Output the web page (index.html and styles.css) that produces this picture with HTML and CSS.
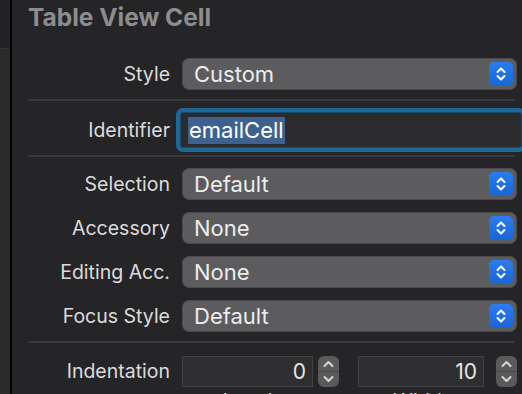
FILE: index.html
```html
<!DOCTYPE html>
<html lang="en">
<head>
  <meta charset="UTF-8" />
  <title>Attributes Inspector</title>
  <link rel="stylesheet" href="styles.css">
</head>
<body>
  <div class="window">
    <aside class="sidebar">
      <div class="sidebar-top"></div>
    </aside>

    <main class="inspector">
      <h1 class="section-title">Table View Cell</h1>

      <div class="row first">
        <label class="label">Style</label>
        <div class="popup">
          <span class="popup-value">Custom</span>
          <span class="popup-arrows">
            <svg width="24" height="24" viewBox="0 0 24 24"><path d="M8.5 10 L12 6.5 L15.5 10 M8.5 14 L12 17.5 L15.5 14" /></svg>
          </span>
        </div>
      </div>

      <div class="divider"></div>

      <div class="row ident">
        <label class="label">Identifier</label>
        <div class="textfield focused">
          <span class="selected">emailCell</span>
        </div>
      </div>

      <div class="divider short"></div>

      <div class="rows">
        <div class="row">
          <label class="label">Selection</label>
          <div class="popup">
            <span class="popup-value">Default</span>
            <span class="popup-arrows">
              <svg width="24" height="24" viewBox="0 0 24 24"><path d="M8.5 10 L12 6.5 L15.5 10 M8.5 14 L12 17.5 L15.5 14" /></svg>
            </span>
          </div>
        </div>
        <div class="row">
          <label class="label">Accessory</label>
          <div class="popup">
            <span class="popup-value">None</span>
            <span class="popup-arrows">
              <svg width="24" height="24" viewBox="0 0 24 24"><path d="M8.5 10 L12 6.5 L15.5 10 M8.5 14 L12 17.5 L15.5 14" /></svg>
            </span>
          </div>
        </div>
        <div class="row">
          <label class="label">Editing Acc.</label>
          <div class="popup">
            <span class="popup-value">None</span>
            <span class="popup-arrows">
              <svg width="24" height="24" viewBox="0 0 24 24"><path d="M8.5 10 L12 6.5 L15.5 10 M8.5 14 L12 17.5 L15.5 14" /></svg>
            </span>
          </div>
        </div>
        <div class="row">
          <label class="label">Focus Style</label>
          <div class="popup">
            <span class="popup-value">Default</span>
            <span class="popup-arrows">
              <svg width="24" height="24" viewBox="0 0 24 24"><path d="M8.5 10 L12 6.5 L15.5 10 M8.5 14 L12 17.5 L15.5 14" /></svg>
            </span>
          </div>
        </div>
      </div>

      <div class="divider"></div>

      <div class="row numbers">
        <label class="label">Indentation</label>
        <div class="number-group">
          <div class="number-pair level">
            <div class="number-field">0</div>
            <div class="stepper">
              <svg width="21" height="31" viewBox="0 0 21 31"><line class="mid" x1="0" y1="15.5" x2="21" y2="15.5" /><path d="M6.5 10 L10.5 6 L14.5 10 M6.5 21 L10.5 25 L14.5 21" /></svg>
            </div>
            <div class="caption">Level</div>
          </div>
          <div class="number-pair width">
            <div class="number-field">10</div>
            <div class="stepper">
              <svg width="21" height="31" viewBox="0 0 21 31"><line class="mid" x1="0" y1="15.5" x2="21" y2="15.5" /><path d="M6.5 10 L10.5 6 L14.5 10 M6.5 21 L10.5 25 L14.5 21" /></svg>
            </div>
            <div class="caption">Width</div>
          </div>
        </div>
      </div>
    </main>
  </div>
</body>
</html>
```

FILE: styles.css
```css
:root {
  --panel: #252528;
  --sidebar: #2a2a2b;
  --sidebar-top: #222224;
  --label: #dcdcdc;
  --title: #8d8d8f;
  --popup: #5c5c5e;
  --popup-edge: #4b4b4d;
  --line: #38383a;
  --blue: #1c6fe0;
  --ring: #1f6797;
  --field: #2b2b2d;
}

* {
  margin: 0;
  padding: 0;
  box-sizing: border-box;
}

html,
body {
  height: 100%;
}

body {
  font-family: 'Inter', 'Liberation Sans', sans-serif;
  background: var(--panel);
  color: var(--label);
  overflow: hidden;
}

.window {
  display: flex;
  height: 394px;
}

.sidebar {
  width: 12px;
  flex: none;
  background: var(--sidebar);
  border-right: 2px solid #000;
}

.sidebar-top {
  height: 49px;
  background: var(--sidebar-top);
  border-bottom: 1px solid #343436;
}

.inspector {
  flex: 1;
  padding: 3px 5px 0 16px;
  min-width: 0;
}

.section-title {
  font-size: 24.5px;
  line-height: 28px;
  font-weight: 700;
  color: var(--title);
}

.row {
  display: grid;
  grid-template-columns: 142px 1fr;
  column-gap: 12px;
  align-items: center;
  height: 32px;
}

.row.first {
  margin-top: 27px;
}

.label {
  text-align: right;
  font-size: 19.5px;
  color: var(--label);
  white-space: nowrap;
}

.popup {
  display: flex;
  align-items: center;
  justify-content: space-between;
  height: 32px;
  background: var(--popup);
  border: 1px solid var(--popup-edge);
  border-radius: 7px;
  padding: 0 3px 0 11px;
}

.popup-value {
  font-size: 22px;
  color: #ececec;
}

.popup-arrows {
  width: 24px;
  height: 24px;
  border-radius: 5px;
  background: linear-gradient(#2a7df0, #1766d8);
  display: flex;
}

.popup-arrows path {
  fill: none;
  stroke: #fff;
  stroke-width: 2;
  stroke-linecap: round;
  stroke-linejoin: round;
}

.divider {
  height: 2px;
  background: var(--line);
  margin: 9px 2px 0 0;
}

.divider.short {
  margin-top: 7px;
}

.row.ident {
  height: 36px;
  margin-top: 11px;
}

.textfield {
  height: 36px;
  margin: 0 -5px 0 -2px;
  background: var(--field);
  border: 1px solid #3e3e40;
  border-radius: 3px;
  display: flex;
  align-items: center;
  padding-left: 7px;
}

.textfield.focused {
  box-shadow: 0 0 0 4px var(--ring);
  border-color: #16496b;
}

.selected {
  font-size: 22px;
  line-height: 27px;
  color: #fff;
  background: #3e6190;
  padding: 0 1px;
}

.rows {
  display: flex;
  flex-direction: column;
  gap: 12px;
  margin-top: 11px;
}

.row.numbers {
  height: 31px;
  margin-top: 13px;
  align-items: start;
}

.row.numbers .label {
  line-height: 31px;
}

.number-group {
  display: flex;
}

.number-pair {
  display: flex;
  position: relative;
}

.number-pair.width {
  margin-left: 19px;
}

.number-field {
  height: 31px;
  background: #2e2e30;
  border: 1px solid #414143;
  font-size: 21px;
  line-height: 29px;
  text-align: right;
  padding-right: 6px;
  color: #e6e6e6;
}

.level .number-field {
  width: 131px;
}

.width .number-field {
  width: 126px;
}

.stepper {
  width: 21px;
  height: 31px;
  margin-left: 5px;
  background: #5a5a5c;
  border-radius: 6px;
  overflow: hidden;
}

.width .stepper {
  margin-left: 12px;
}

.stepper path {
  fill: none;
  stroke: #d6d6d6;
  stroke-width: 2;
  stroke-linecap: round;
  stroke-linejoin: round;
}

.stepper .mid {
  stroke: #454547;
  stroke-width: 1;
}

.caption {
  position: absolute;
  top: 33px;
  left: 0;
  width: 131px;
  text-align: center;
  font-size: 20px;
  color: var(--label);
}

.width .caption {
  width: 126px;
}
```
